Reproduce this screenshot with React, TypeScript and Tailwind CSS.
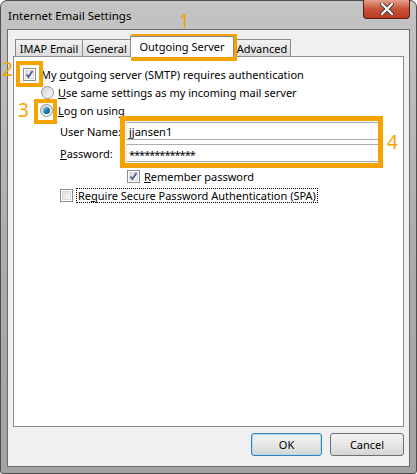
import React from "react";

const font = { fontFamily: '"Segoe UI", "Noto Sans", "Open Sans", sans-serif' };

function CheckBox({ checked }: { checked?: boolean }) {
  return (
    <span className="relative inline-block w-[13px] h-[13px] border border-[#8e8f8f] bg-white shrink-0">
      <span className="absolute inset-[1px] border border-[#d8d8d8] bg-gradient-to-br from-[#dcdcdc] to-[#fbfbfb]" />
      {checked && (
        <svg viewBox="0 0 11 11" className="absolute left-0 top-0 w-[11px] h-[11px]">
          <path d="M2.5 5.5 L4.5 8 L8.5 2" fill="none" stroke="#4a5f97" strokeWidth="1.8" />
        </svg>
      )}
    </span>
  );
}

function Radio({ checked }: { checked?: boolean }) {
  return (
    <span className="relative inline-flex items-center justify-center w-[13px] h-[13px] rounded-full border border-[#8e8f8f] bg-gradient-to-br from-[#d6d6d6] to-[#fbfbfb] shrink-0">
      {checked && (
        <span className="w-[7px] h-[7px] rounded-full bg-gradient-to-br from-[#8ad4f8] via-[#1e7fb8] to-[#0b4b7a]" />
      )}
    </span>
  );
}

function Tab({ label, width, active }: { label: string; width: string; active?: boolean }) {
  return (
    <div
      className={
        width +
        (active
          ? " h-[21px] -mb-[1px] -ml-[1px] pb-[2px] flex items-center justify-center bg-white border border-b-0 border-[#898c95] text-black z-10 whitespace-nowrap"
          : " h-[17px] flex items-center justify-center bg-gradient-to-b from-[#f2f2f2] to-[#dcdcdc] border border-b-0 border-[#898c95] -ml-[1px] first:ml-0 text-black whitespace-nowrap")
      }
    >
      {label}
    </div>
  );
}

function Button({ label, primary }: { label: string; primary?: boolean }) {
  return (
    <button
      className={
        "h-[23px] rounded-[3px] border flex items-center justify-center bg-gradient-to-b from-[#f2f2f2] via-[#e8e8e8] to-[#d4d4d4] text-black " +
        (primary ? "w-[71px] border-[#3c7fb1] shadow-[inset_0_0_0_1px_#a6dcf5]" : "w-[74px] border-[#707070]")
      }
    >
      {label}
    </button>
  );
}

export default function App() {
  return (
    <div className="relative w-[417px] h-[474px] bg-white text-[11px] leading-none text-black" style={font}>
      <div className="w-full h-full rounded-t-[7px] rounded-b-[3px] border border-[#4e4e4e] bg-gradient-to-b from-[#c4c4c4] via-[#adadad] to-[#a2a2a2] flex flex-col pl-[6px] pr-[6px] pb-[6px]">
        <div className="h-[28px] flex items-start shrink-0">
          <span className="pt-[9px] pl-[1px] text-[11.5px] flex-1">Internet Email Settings</span>
          <div className="w-[47px] h-[19px] -mt-[1px] rounded-b-[4px] border border-t-0 border-[#5b1d12] bg-gradient-to-b from-[#e4a08e] via-[#c8523a] to-[#b93c22] flex items-center justify-center">
            <svg viewBox="0 0 14 12" className="w-[14px] h-[12px]">
              <path d="M2 1 L12 11 M12 1 L2 11" stroke="#3a3a3a" strokeWidth="4" strokeLinecap="round" />
              <path d="M2 1 L12 11 M12 1 L2 11" stroke="#ffffff" strokeWidth="2.2" strokeLinecap="round" />
            </svg>
          </div>
        </div>
        <div className="flex-1 border border-[#6b6b6b] bg-[#f0f0f0] flex flex-col px-[5px] pt-[9px] pb-[8px]">
          <div className="flex items-end pl-[2px] h-[17px] shrink-0">
            <Tab label="IMAP Email" width="w-[68px]" />
            <Tab label="General" width="w-[49px]" />
            <Tab label="Outgoing Server" width="w-[104px]" active />
            <Tab label="Advanced" width="w-[58px]" />
          </div>
          <div className="h-[371px] border border-[#898c95] bg-white flex flex-col pt-[8px]">
            <label className="h-[18px] flex items-center pl-[9px] gap-[5px]">
              <CheckBox checked />
              <span>
                My <u>o</u>utgoing server (SMTP) requires authentication
              </span>
            </label>
            <label className="h-[18px] flex items-center pl-[27px] gap-[4px]">
              <Radio />
              <span>
                <u>U</u>se same settings as my incoming mail server
              </span>
            </label>
            <label className="h-[18px] flex items-center pl-[26px] gap-[5px]">
              <Radio checked />
              <span>
                <u>L</u>og on using
              </span>
            </label>
            <div className="flex items-center mt-[3px] h-[18px]">
              <span className="w-[112px] pl-[46px] whitespace-nowrap">User Name:</span>
              <div className="w-[253px] h-[18px] border border-[#abadb3] border-l-[#e2e3ea] border-r-[#dbdfe6] flex items-center px-[2px]">
                jjansen1
              </div>
            </div>
            <div className="flex items-center mt-[4px] h-[18px]">
              <span className="w-[112px] pl-[46px] whitespace-nowrap">
                <u>P</u>assword:
              </span>
              <div className="w-[253px] h-[18px] border border-[#abadb3] border-l-[#e2e3ea] border-r-[#dbdfe6] flex items-center px-[2px] pt-[3px] tracking-[-1px]">
                *************
              </div>
            </div>
            <label className="h-[18px] mt-[5px] flex items-center pl-[113px] gap-[4px]">
              <CheckBox checked />
              <span>
                <u>R</u>emember password
              </span>
            </label>
            <label className="h-[18px] mt-[1px] flex items-center pl-[46px] gap-[3px]">
              <CheckBox />
              <span className="border border-dotted border-black px-[1px] py-[1px]">
                Re<u>q</u>uire Secure Password Authentication (SPA)
              </span>
            </label>
          </div>
          <div className="flex justify-end gap-[8px] mt-[6px]">
            <Button label="OK" primary />
            <Button label="Cancel" />
          </div>
        </div>
      </div>

      {/* orange callouts */}
      <div className="absolute left-[131px] top-[34px] w-[106px] h-[27px] border-[4px] border-[#f5a300]" />
      <span className="absolute left-[179px] top-[12px] text-[19px] text-[#f5a300]">1</span>
      <div className="absolute left-[16px] top-[61px] w-[27px] h-[26px] border-[4px] border-[#f5a300]" />
      <span className="absolute left-[2px] top-[60px] text-[19px] text-[#f5a300]">2</span>
      <div className="absolute left-[34px] top-[99px] w-[23px] h-[25px] border-[4px] border-[#f5a300]" />
      <span className="absolute left-[18px] top-[101px] text-[19px] text-[#f5a300]">3</span>
      <div className="absolute left-[120px] top-[116px] w-[263px] h-[52px] border-[5px] border-[#f5a300]" />
      <span className="absolute left-[387px] top-[133px] text-[19px] text-[#f5a300]">4</span>
    </div>
  );
}
